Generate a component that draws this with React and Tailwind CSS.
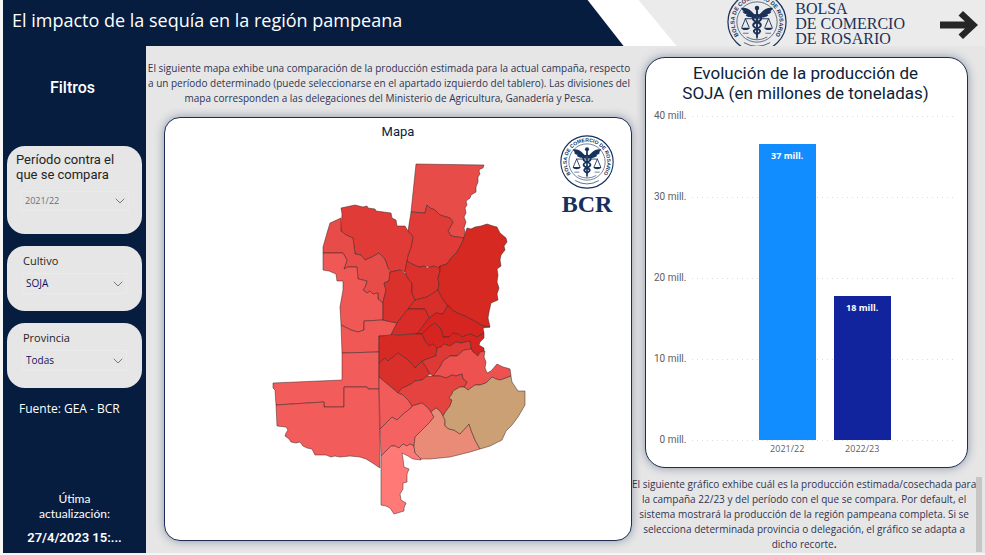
import React, { useState } from 'react';
import { ChevronDown } from 'lucide-react';

// Delegaciones del Ministerio, coordenadas en el espacio del mapa
const regions = [
    { id: 'sf-norte', color: '#e84c49', points: '416,164 484,165 483,168 480,169 479,171 480,174 478,177 478,182 476,187 476,192 471,195 470,198 466,201 467,205 465,208 466,213 464,217 466,222 464,228 465,232 464,238 451,236 448,231 453,222 450,218 440,215 435,210 430,208 427,205 425,213 411,212' },
    { id: 'sf-rafaela', color: '#e03b37', points: '411,212 425,213 427,205 430,208 435,210 440,215 450,218 453,222 448,231 451,236 464,238 462,243 457,252 451,258 447,264 440,266 439,268 434,266 431,268 427,266 425,268 419,267 412,264 407,261 408,255 411,245 413,237 408,231' },
    { id: 'cba-norte', color: '#e03b37', points: '341,208 355,205 363,207 367,206 368,208 375,209 376,211 391,213 392,218 396,220 397,226 405,226 408,231 413,237 411,248 408,255 407,261 405,272 400,270 391,272 388,268 386,262 384,258 379,253 372,257 365,260 361,255 355,254 353,238 346,235 341,231 342,214' },
    { id: 'cba-oeste', color: '#e84c49', points: '341,218 330,223 327,233 323,247 323,253 343,253 347,260 344,269 348,267 357,267 358,279 367,281 365,287 363,290 367,293 370,291 373,294 378,293 378,299 383,303 386,290 384,283 389,281 390,272 388,268 386,262 384,258 379,253 372,257 365,260 361,255 355,254 353,238 346,235 341,231' },
    { id: 'cba-rio-cuarto', color: '#f05855', points: '323,253 343,253 347,260 344,269 348,267 357,267 358,279 367,281 365,287 363,290 367,293 370,291 373,294 378,293 378,299 383,303 383,320 364,321 364,330 358,332 351,330 341,325 340,307 343,290 343,281 337,281 336,274 329,271 323,270' },
    { id: 'cba-laboulaye', color: '#f05855', points: '341,325 351,330 358,332 364,330 364,321 383,320 397,323 391,335 379,336 379,352 342,353' },
    { id: 'lp-pico', color: '#f25d5c', points: '342,353 379,352 379,389 368,389 367,387 344,387 344,407 324,407 324,402 276,405 275,390 273,388 273,383 342,380' },
    { id: 'lp-santa-rosa', color: '#f25d5c', points: '276,405 324,402 324,407 344,407 344,387 367,387 368,389 379,389 380,468 371,462 366,459 360,457 350,456 340,457 335,456 331,457 326,455 315,455 312,449 307,448 303,446 300,442 296,443 291,442 289,439 285,436 286,433 288,430 286,427 277,426' },
    { id: 'cba-marcos-juarez', color: '#db312d', points: '390,272 400,270 406,274 409,280 412,283 412,293 415,300 408,309 397,323 383,320 383,302 386,290 384,283 389,281' },
    { id: 'cba-san-francisco', color: '#db312d', points: '407,261 412,264 419,267 424,266 427,268 434,266 438,268 440,266 440,272 438,278 439,284 438,290 427,297 415,300 412,293 412,283 409,280 405,272' },
    { id: 'sf-canada', color: '#d92f2b', points: '438,290 427,297 415,300 408,309 425,309 429,318 436,313 443,314 448,305 442,298' },
    { id: 'sf-casilda', color: '#d92c28', points: '408,309 425,309 429,318 417,334 391,335 397,323' },
    { id: 'er', color: '#d62922', points: '464,238 466,231 467,228 471,229 475,227 481,226 487,224 493,226 497,227 500,233 506,238 507,242 504,246 505,250 501,255 500,260 501,266 497,269 498,275 497,282 499,288 497,294 498,300 491,303 489,312 488,318 490,327 483,326 476,322 467,317 462,315 453,311 447,305 442,298 438,290 439,284 438,278 440,272 440,266 447,264 451,258 457,252 462,243' },
    { id: 'sf-rosario', color: '#d62520', points: '448,305 453,311 462,315 467,317 476,322 483,326 490,327 483,328 484,333 477,337 470,334 462,337 458,334 453,333 449,337 443,337 441,329 438,326 435,323 430,326 422,334 417,334 429,318 436,313 443,314' },
    { id: 'ba-pergamino', color: '#d62520', points: '422,334 430,326 435,323 438,326 441,329 443,337 449,337 453,333 458,334 462,337 470,334 477,337 484,333 484,338 480,342 479,345 484,348 484,351 480,352 478,356 473,352 471,349 470,341 461,343 456,342 450,346 444,344 441,347 437,348 433,344 429,346 425,341' },
    { id: 'sf-venado', color: '#d82a25', points: '379,336 417,334 422,334 425,341 429,346 433,344 437,348 436,356 430,358 422,361 415,368 408,360 398,353 393,357 388,361 385,358 379,363' },
    { id: 'ba-villegas', color: '#d9302b', points: '379,363 385,358 388,361 393,357 398,353 408,360 415,368 422,361 426,367 430,374 427,376 422,380 415,381 411,384 405,387 402,388 398,393 379,377' },
    { id: 'ba-junin', color: '#de3935', points: '422,361 430,358 436,356 437,348 441,347 444,344 450,346 456,342 461,343 470,341 471,349 464,350 457,356 450,356 443,361 440,367 433,376 430,374 426,367' },
    { id: 'ba-delta', color: '#ee5250', points: '433,376 440,367 443,361 450,356 457,356 464,350 471,349 473,352 478,356 480,352 485,351 484,357 486,362 485,368 487,373 491,371 497,364 503,367 507,368 510,369 511,376 506,378 500,380 496,379 492,377 486,383 480,385 475,385 468,390 464,387 467,382 463,379 462,374 456,376 452,375 446,378 440,376' },
    { id: 'ba-bragado', color: '#e4433f', points: '398,393 402,388 405,387 411,384 415,381 422,380 427,376 433,376 440,376 446,378 452,375 456,376 462,374 463,379 467,382 464,387 460,387 453,391 452,394 449,398 452,400 450,406 446,411 443,416 440,411 436,408 431,412 427,407 422,403 412,406 408,400 403,395' },
    { id: 'ba-pehuajo', color: '#f15b59', points: '379,377 398,393 403,395 408,400 412,406 411,408 402,415 397,420 392,417 380,429' },
    { id: 'ba-pigue', color: '#f46361', points: '380,429 392,417 397,420 402,415 411,408 412,406 422,403 427,407 431,412 434,417 430,422 422,430 415,437 414,446 410,444 407,446 403,444 399,448 395,446 391,446 381,456' },
    { id: 'ba-bahia', color: '#ff7977', points: '381,456 391,446 395,446 399,448 403,444 407,446 410,444 414,446 415,453 421,458 421,460 413,459 408,456 402,453 403,459 404,467 409,469 407,474 407,482 403,483 403,489 400,494 401,500 406,503 404,508 404,511 394,514 390,508 386,506 381,505' },
    { id: 'ba-tres-arroyos', color: '#e98b77', points: '414,446 415,437 422,430 430,422 434,417 431,412 436,408 440,411 443,416 445,420 445,426 449,429 454,430 460,434 469,424 471,430 475,440 480,449 470,452 450,457 430,459 421,459 415,453' },
    { id: 'ba-tandil', color: '#cba074', points: '443,416 446,411 450,406 452,400 449,398 452,394 453,391 460,387 464,387 468,390 475,385 480,385 486,383 492,377 496,379 500,380 506,378 511,376 512,382 518,391 525,391 525,405 518,417 512,425 506,431 502,440 490,446 480,449 475,440 471,430 469,424 460,434 454,430 449,429 445,426 445,420' },
];

const bars = [
    { label: '2021/22', value: 36.5, text: '37 mill.', color: 'bg-[#118dff]' },
    { label: '2022/23', value: 17.8, text: '18 mill.', color: 'bg-[#12239e]' },
];

const ticks = ['40 mill.', '30 mill.', '20 mill.', '10 mill.', '0 mill.'];
const maxValue = 40;

const Seal = ({ id, className }) => (
    <svg viewBox="0 0 64 64" className={className} fill="none" stroke="currentColor" aria-hidden="true">
        <defs>
            <path id={id} d="M15 49 A24 24 0 1 1 49 49" />
        </defs>
        <circle cx="32" cy="32" r="31" strokeWidth="1.3" />
        <circle cx="32" cy="32" r="21.500" strokeWidth="0.7" />
        <text fill="currentColor" stroke="none" fontSize="6" fontWeight="700" fontFamily="Liberation Sans, sans-serif">
            <textPath href={`#${id}`} startOffset="50%" textAnchor="middle">BOLSA DE COMERCIO DE ROSARIO</textPath>
        </text>
        {/* alas y caduceo */}
        <g fill="currentColor" stroke="none">
            <circle cx="32" cy="17" r="2.400" />
            <path d="M31 25 C27 23 25 16 15 17 C16 19 17 20 18 20.500 L16.500 21 C18 23 20 23.500 21 23.500 L20 25 C24 28 28 27 31 28Z" />
            <path d="M33 25 C37 23 39 16 49 17 C48 19 47 20 46 20.500 L47.500 21 C46 23 44 23.500 43 23.500 L44 25 C40 28 36 27 33 28Z" />
            <path d="M31 19h2v29l-1 3l-1-3z" />
            <path d="M15 38h9.500c-1 3.500-8.500 3.500-9.500 0z" />
            <path d="M39.500 38h9.500c-1 3.500-8.500 3.500-9.500 0z" />
        </g>
        <path d="M32 24c-6 2-6 6 0 8s5 5 0 7-4 4 0 6M32 24c6 2 6 6 0 8s-5 5 0 7 4 4 0 6" strokeWidth="2" />
        <path d="M19 28.500h26M19.700 28.500l-4 9.500M19.700 28.500l4 9.500M44.300 28.500l-4 9.500M44.300 28.500l4 9.500" strokeWidth="1" />
        <path d="M21 48q11 6 22 0M17 44h6M41 44h6" strokeWidth="0.700" />
        <path d="M18 54q14 8 28 0" strokeWidth="0.800" />
    </svg>
);

const Filter = ({ id, label, options, value, onChange, large }) => (
    <div className={large ? 'h-[88px] rounded-[18px] bg-[#e6e6e6] px-[9px] pt-[6px]' : 'h-[65px] rounded-[18px] bg-[#e6e6e6] px-[15px] pt-[7px]'}>
        <label
            htmlFor={id}
            className={large ? 'block font-[Roboto] text-[13px] leading-[15px] text-[#252423]' : 'block pl-px text-[11px] leading-[16px] text-[#252423]'}
        >
            {label}
        </label>
        <div className={large ? 'mx-[4px] mt-[9px] grid items-center' : 'mt-[4px] grid items-center'}>
            <select
                id={id}
                value={value}
                onChange={(e) => onChange(e.target.value)}
                className={
                    large
                        ? 'col-start-1 row-start-1 h-[20px] w-full appearance-none border border-[#eaeaea] bg-transparent px-[4px] text-[9px] text-[#6c6c80]'
                        : 'col-start-1 row-start-1 h-[21px] w-full appearance-none border border-[#eaeaea] bg-transparent px-[3px] text-[10px] text-[#12125c]'
                }
            >
                {options.map((option) => (
                    <option key={option}>{option}</option>
                ))}
            </select>
            <ChevronDown className="pointer-events-none col-start-1 row-start-1 mr-[1px] size-[16px] justify-self-end text-[#666]" strokeWidth={1.3} />
        </div>
    </div>
);

const Sidebar = () => {
    const [filters, setFilters] = useState({ periodo: '2021/22', cultivo: 'SOJA', provincia: 'Todas' });

    const handleChange = (field, value) => {
        setFilters((prev) => ({ ...prev, [field]: value }));
    };

    return (
        <aside className="flex w-[143px] shrink-0 flex-col bg-[#071d40] px-[4px] pb-[6px] text-white">
            <h2 className="pt-[30px] pr-[4px] text-center font-[Roboto] text-[16px] leading-[24px] font-medium">Filtros</h2>
            <div className="mt-[46px] flex flex-col gap-[12px]">
                <Filter
                    id="periodo"
                    large
                    label={<>Período contra el<br />que se compara</>}
                    options={['2021/22', '2020/21', '2019/20']}
                    value={filters.periodo}
                    onChange={(value) => handleChange('periodo', value)}
                />
                <Filter
                    id="cultivo"
                    label="Cultivo"
                    options={['SOJA', 'MAÍZ', 'TRIGO']}
                    value={filters.cultivo}
                    onChange={(value) => handleChange('cultivo', value)}
                />
                <Filter
                    id="provincia"
                    label="Provincia"
                    options={['Todas', 'Buenos Aires', 'Córdoba', 'Entre Ríos', 'La Pampa', 'Santa Fe']}
                    value={filters.provincia}
                    onChange={(value) => handleChange('provincia', value)}
                />
            </div>
            <p className="mt-[13px] pl-[12px] text-[12px] leading-[16px] font-medium">Fuente: GEA - BCR</p>
            <div className="mt-auto text-center">
                <p className="font-[Lato] text-[12px] leading-[15px]">Útima<br />actualización:</p>
                <p className="mt-[8px] font-[Roboto] text-[13px] leading-[18px] font-semibold">27/4/2023 15:...</p>
            </div>
        </aside>
    );
};

const Header = () => (
    <header className="flex h-[46px] items-start justify-between overflow-hidden bg-[#ebebeb]">
        <div className="w-[calc(69%-4px)] bg-white pr-[53px] [clip-path:polygon(0_0,calc(100%-38px)_0,100%_100%,0_100%)]">
            <div className="flex h-[46px] items-center bg-[#071d40] pb-[6px] pl-[9px] [clip-path:polygon(0_0,calc(100%-36px)_0,100%_100%,0_100%)]">
                <h1 className="text-[18px] leading-[24px] whitespace-nowrap text-white">El impacto de la sequía en la región pampeana</h1>
            </div>
        </div>
        <div className="flex items-start pr-[7px] text-[#1b3158]">
            <Seal id="seal-header" className="-mt-[8px] size-[60px]" />
            <p className="ml-[8px] pt-[1px] font-['Liberation_Serif',serif] text-[16px] leading-[15px] whitespace-nowrap">
                BOLSA<br />DE COMERCIO<br />DE ROSARIO
            </p>
            <button type="button" aria-label="Siguiente" className="mt-[11px] ml-[35px]">
                <svg viewBox="0 0 38 28" className="h-[28px] w-[38px]" fill="#262626">
                    <path d="M0 10.500H25L18.500 4.500L23 0L38 14L23 28L18.500 23.500L25 17.500H0Z" />
                </svg>
            </button>
        </div>
    </header>
);

const MapCard = () => (
    <section className="ml-[18px] grid h-[424px] rounded-[16px] border border-[#1c2f52] bg-white shadow-[0_0_10px_rgba(30,50,95,0.45)]">
        <h2 className="col-start-1 row-start-1 pt-[5px] text-center font-[Roboto] text-[13px] leading-[18px] text-[#0b2239]">Mapa</h2>
        <svg
            viewBox="165 118 466 422"
            className="col-start-1 row-start-1 size-full"
            stroke="#3a2020"
            strokeOpacity="0.7"
            strokeWidth="0.7"
            strokeLinejoin="round"
            role="img"
            aria-label="Mapa de delegaciones"
        >
            {regions.map((region) => (
                <polygon key={region.id} points={region.points} fill={region.color} />
            ))}
        </svg>
        <div className="col-start-1 row-start-1 mt-[17px] mr-[17px] flex flex-col items-center justify-self-end text-[#14305c]">
            <Seal id="seal-map" className="size-[54px]" />
            <span className="mt-[2px] font-['Liberation_Serif',serif] text-[24px] leading-[26px] font-bold">BCR</span>
        </div>
    </section>
);

const ChartCard = () => (
    <section className="mr-[17px] ml-[13px] h-[411px] rounded-[20px] border border-[#1c2f52] bg-white pr-[10px] pl-[8px] shadow-[0_0_10px_rgba(30,50,95,0.45)]">
        <h2 className="pt-[5px] text-center font-[Roboto] text-[17px] leading-[20px] text-[#0b2239]">
            Evolución de la producción de<br />SOJA (en millones de toneladas)
        </h2>
        <div className="mt-[7px] flex gap-[6px]">
            <ul className="flex h-[336px] flex-col justify-between text-right font-[Roboto] text-[10px] leading-[12px] whitespace-nowrap text-[#605e5c]">
                {ticks.map((tick) => (
                    <li key={tick}>{tick}</li>
                ))}
            </ul>
            <div className="grid flex-1 pt-[6px]">
                <div className="col-start-1 row-start-1 flex h-[325px] flex-col justify-between">
                    {ticks.map((tick) => (
                        <div key={tick} className="h-px bg-[repeating-linear-gradient(90deg,#dcdcdc_0_1px,transparent_1px_5px)]" />
                    ))}
                </div>
                <div className="col-start-1 row-start-1 flex justify-center gap-[18px]">
                    {bars.map((bar) => (
                        <div key={bar.label} className="w-[57px] text-center">
                            <div className="flex h-[324px] items-end">
                                <div
                                    className={`${bar.color} w-full pt-[6px] text-[9px] leading-[12px] font-bold text-white`}
                                    style={{ height: `${(bar.value / maxValue) * 100}%` }}
                                >
                                    {bar.text}
                                </div>
                            </div>
                            <p className="mt-[3px] text-[9px] leading-[12px] text-[#605e5c]">{bar.label}</p>
                        </div>
                    ))}
                </div>
            </div>
        </div>
    </section>
);

const App = () => (
    <div className="flex min-h-screen flex-col border-b-2 border-l-3 border-[#f6f6f6] bg-[#e6e6e6] font-['Open_Sans',sans-serif]">
        <Header />
        <div className="flex flex-1">
            <Sidebar />
            <main className="grid min-w-0 flex-1 grid-cols-[minmax(0,486fr)_minmax(0,353fr)] content-start">
                <div>
                    <p className="h-[71px] pt-[15px] text-center text-[10px] leading-[15px] whitespace-nowrap text-[#2f3452]">
                        El siguiente mapa exhibe una comparación de la producción estimada para la actual campaña, respecto<br />
                        a un período determinado (puede seleccionarse en el apartado izquierdo del tablero). Las divisiones del<br />
                        mapa corresponden a las delegaciones del Ministerio de Agricultura, Ganadería y Pesca.
                    </p>
                    <MapCard />
                </div>
                <div className="pt-[11px]">
                    <ChartCard />
                    <div className="mt-[9px] flex pr-[3px]">
                        <p className="flex-1 text-center text-[10px] leading-[15px] whitespace-nowrap text-[#2f3452]">
                            El siguiente gráfico exhibe cuál es la producción estimada/cosechada para<br />
                            la campaña 22/23 y del período con el que se compara. Por default, el<br />
                            sistema mostrará la producción de la región pampeana completa. Si se<br />
                            selecciona determinada provincia o delegación, el gráfico se adapta a<br />
                            dicho recorte<b>.</b>
                        </p>
                        <div className="w-[6px] bg-[#c6c6c6]" />
                    </div>
                </div>
            </main>
        </div>
    </div>
);

export default App;
